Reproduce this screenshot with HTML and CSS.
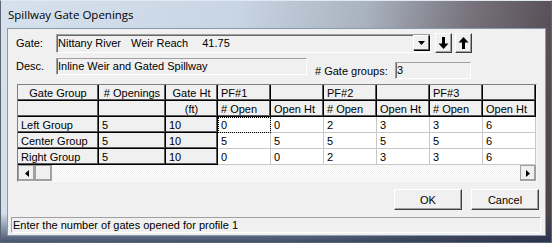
FILE: index.html
```html
<!DOCTYPE html>
<html lang="en">

<head>
  <meta charset="UTF-8" />
  <meta name="viewport" content="width=device-width, initial-scale=1.0" />
  <title>Spillway Gate Openings</title>
  <link rel="stylesheet" href="styles.css">
</head>

<body>
  <div class="window">
    <div class="titlebar">Spillway Gate Openings</div>

    <div class="client">
      <!-- Gate selector -->
      <div class="gate-row">
        <span class="lbl">Gate:</span>
        <div class="combo">
          <span>Nittany River</span>
          <span class="gap-a">Weir Reach</span>
          <span class="gap-b">41.75</span>
          <span class="combo-btn">
            <svg width="7" height="4" viewBox="0 0 7 4"><polygon points="0,0 7,0 3.5,4" fill="#000" /></svg>
          </span>
        </div>
        <button class="arrow-btn">
          <svg width="11" height="14" viewBox="0 0 11 14"><rect x="4" y="1" width="3" height="7" fill="#000" /><polygon points="0.5,7.5 10.5,7.5 5.5,13" fill="#000" /></svg>
        </button>
        <button class="arrow-btn">
          <svg width="11" height="14" viewBox="0 0 11 14"><polygon points="0.5,6.5 10.5,6.5 5.5,1" fill="#000" /><rect x="4" y="6" width="3" height="7" fill="#000" /></svg>
        </button>
      </div>

      <!-- Description and group count -->
      <div class="desc-row">
        <span class="lbl">Desc.</span>
        <div class="field desc-field">Inline Weir and Gated Spillway</div>
        <div class="groups">
          <span class="groups-lbl"># Gate groups:</span>
          <div class="field groups-field">3</div>
        </div>
      </div>

      <!-- Gate table -->
      <div class="grid-box">
        <div class="grid">
          <div class="c fx ctr">Gate Group</div>
          <div class="c fx ctr"># Openings</div>
          <div class="c fx ctr">Gate Ht</div>
          <div class="c fx">PF#1</div>
          <div class="c fx"></div>
          <div class="c fx">PF#2</div>
          <div class="c fx"></div>
          <div class="c fx">PF#3</div>
          <div class="c fx"></div>

          <div class="c fx"></div>
          <div class="c fx"></div>
          <div class="c fx ctr">(ft)</div>
          <div class="c fx"># Open</div>
          <div class="c fx">Open Ht</div>
          <div class="c fx"># Open</div>
          <div class="c fx">Open Ht</div>
          <div class="c fx"># Open</div>
          <div class="c fx">Open Ht</div>

          <div class="c fx">Left Group</div>
          <div class="c fx">5</div>
          <div class="c fx">10</div>
          <div class="c focus">0</div>
          <div class="c">0</div>
          <div class="c">2</div>
          <div class="c">3</div>
          <div class="c">3</div>
          <div class="c">6</div>

          <div class="c fx">Center Group</div>
          <div class="c fx">5</div>
          <div class="c fx">10</div>
          <div class="c">5</div>
          <div class="c">5</div>
          <div class="c">5</div>
          <div class="c">5</div>
          <div class="c">5</div>
          <div class="c">6</div>

          <div class="c fx">Right Group</div>
          <div class="c fx">5</div>
          <div class="c fx">10</div>
          <div class="c">0</div>
          <div class="c">0</div>
          <div class="c">2</div>
          <div class="c">3</div>
          <div class="c">3</div>
          <div class="c">6</div>
        </div>

        <div class="hscroll">
          <div class="sb-btn">
            <svg width="4" height="7" viewBox="0 0 4 7"><polygon points="4,0 4,7 0,3.5" fill="#000" /></svg>
          </div>
          <div class="sb-btn"></div>
          <div class="sb-track"></div>
          <div class="sb-btn">
            <svg width="4" height="7" viewBox="0 0 4 7"><polygon points="0,0 0,7 4,3.5" fill="#000" /></svg>
          </div>
        </div>
      </div>

      <div class="buttons">
        <button class="btn">OK</button>
        <button class="btn">Cancel</button>
      </div>

      <div class="status">Enter the number of gates opened for profile 1</div>
    </div>
  </div>
</body>

</html>
```

FILE: styles.css
```css
* {
  margin: 0;
  padding: 0;
  box-sizing: border-box;
  font-family: 'Liberation Sans', Arial, sans-serif;
}

body {
  width: 552px;
  height: 243px;
  overflow: hidden;
  background: #2f3540;
}

.window {
  width: 552px;
  height: 243px;
  display: flex;
  flex-direction: column;
  background:
    linear-gradient(to bottom, rgba(255, 255, 255, 0) 88%, rgba(35, 50, 80, 0.8) 100%),
    linear-gradient(100deg, #d6e1ed 0%, #c8d5e4 40%, #a9b2bf 62%, #76717a 80%, #4a4046 100%);
  border: 1px solid #5b6470;
  border-top-color: #e2e8ef;
}

.titlebar {
  height: 27px;
  padding: 6px 0 0 7px;
  font-family: 'Open Sans', sans-serif;
  font-size: 11.5px;
  color: #000;
}

.client {
  margin: 0 5px 0 6px;
  height: 208px;
  background: #f0f0f0;
  border: 1px solid #8c99aa;
  padding-top: 4px;
  font-size: 11px;
  color: #000;
}

.lbl {
  width: 48px;
  padding-left: 8px;
  flex-shrink: 0;
}

/* gate row */
.gate-row {
  display: flex;
  align-items: center;
  height: 20px;
}

.combo {
  width: 375px;
  height: 19px;
  display: flex;
  align-items: center;
  padding-left: 1px;
  border: 1px solid;
  border-color: #a0a0a0 #fff #fff #a0a0a0;
  box-shadow: inset 1px 1px 0 #696969;
}

.gap-a {
  margin-left: 10px;
}

.gap-b {
  margin-left: 14px;
}

.combo-btn {
  margin-left: auto;
  margin-right: 1px;
  width: 16px;
  height: 15px;
  display: flex;
  align-items: center;
  justify-content: center;
  border: 1px solid;
  border-color: #fff #696969 #696969 #fff;
  box-shadow: 1px 1px 0 #000;
  margin-bottom: 1px;
}

.arrow-btn {
  width: 17px;
  height: 20px;
  margin-left: 4px;
  background: #f0f0f0;
  display: flex;
  align-items: center;
  justify-content: center;
  border: 1px solid;
  border-color: #fff #404040 #404040 #fff;
  box-shadow: inset -1px -1px 0 #a0a0a0;
}

.arrow-btn + .arrow-btn {
  margin-left: 3px;
}

/* description row */
.desc-row {
  display: flex;
  align-items: flex-start;
  margin-top: 5px;
}

.desc-row .lbl {
  padding-top: 2px;
}

.field {
  height: 17px;
  line-height: 15px;
  padding-left: 1px;
  border: 1px solid;
  border-color: #a0a0a0 #fff #fff #a0a0a0;
  box-shadow: inset 1px 0 0 #696969;
}

.desc-field {
  width: 251px;
}

.groups {
  display: flex;
  align-items: center;
  margin-top: 4px;
  margin-left: 8px;
}

.groups-lbl {
  width: 80px;
}

.groups-field {
  width: 76px;
}

/* grid */
.grid-box {
  width: 520px;
  margin: 5px 0 0 9px;
  border: 1px solid;
  border-color: #808080 #f8f8f8 #f8f8f8 #808080;
}

.grid {
  display: grid;
  grid-template-columns: 81px 67px 52px repeat(6, 53px);
  grid-auto-rows: 16px;
}

.c {
  background: #fff;
  border-right: 1px solid #c8c8c8;
  border-bottom: 1px solid #c8c8c8;
  padding-left: 3px;
  line-height: 16px;
  white-space: nowrap;
  overflow: hidden;
}

.c.fx {
  background: #f0f0f0;
  border-color: #000;
  box-shadow: inset -1px -1px 0 #5a5a5a;
}

.c.ctr {
  text-align: center;
  padding-left: 0;
}

.c.focus {
  outline: 1px dotted #000;
  outline-offset: -1px;
}

.hscroll {
  display: flex;
  height: 16px;
}

.sb-btn {
  width: 17px;
  height: 16px;
  background: #f0f0f0;
  display: flex;
  align-items: center;
  justify-content: center;
  border: 1px solid;
  border-color: #fff #696969 #696969 #fff;
  box-shadow: inset -1px -1px 0 #a0a0a0;
  outline: 1px solid #a0a0a0;
  outline-offset: -1px;
}

.sb-btn:last-child {
  width: 16px;
}

.sb-track {
  flex: 1;
  background: repeating-conic-gradient(#f0f0f0 0 25%, #fff 0 50%) 0 0 / 2px 2px;
}

/* buttons */
.buttons {
  display: flex;
  justify-content: flex-end;
  gap: 9px;
  margin-top: 7px;
  padding-right: 6px;
}

.btn {
  width: 68px;
  height: 21px;
  background: #f0f0f0;
  font-size: 11px;
  color: #000;
  border: 1px solid;
  border-color: #fff #404040 #404040 #fff;
  box-shadow: inset -1px -1px 0 #a0a0a0;
}

.status {
  margin: 7px 4px 0 3px;
  height: 16px;
  line-height: 14px;
  padding-left: 1px;
  border: 1px solid;
  border-color: #a0a0a0 #fff #fff #a0a0a0;
}
```
